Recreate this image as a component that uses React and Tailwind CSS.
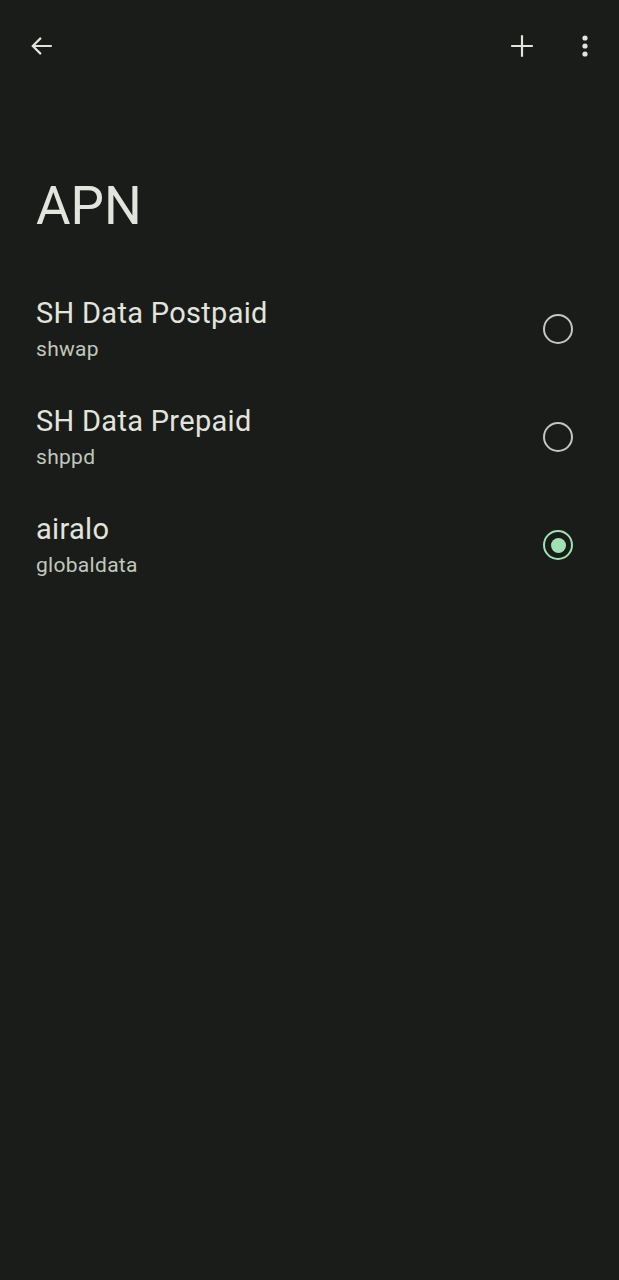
import { useState } from "react";

const apns = [
  { id: "postpaid", name: "SH Data Postpaid", apn: "shwap" },
  { id: "prepaid", name: "SH Data Prepaid", apn: "shppd" },
  { id: "airalo", name: "airalo", apn: "globaldata" },
];

function Radio({ checked }) {
  return (
    <span
      className={
        "flex h-[30px] w-[30px] items-center justify-center rounded-full border-[2.5px] " +
        (checked ? "border-[#9fe3b2]" : "border-[#c2c8bf]")
      }
    >
      {checked && <span className="h-[15px] w-[15px] rounded-full bg-[#9fe3b2]" />}
    </span>
  );
}

export default function App() {
  const [selected, setSelected] = useState("airalo");

  return (
    <div className="min-h-[1280px] bg-[#191c18] font-['Roboto',sans-serif] text-[#e2e4dd]">
      <header className="flex h-[92px] items-center justify-between px-[22px]">
        <button className="flex h-10 w-10 items-center justify-center">
          <svg width="26" height="26" viewBox="0 0 24 24" fill="none" stroke="#e2e4dd" strokeWidth="2">
            <path d="M21 12H4M11 4.5 3.5 12l7.5 7.5" />
          </svg>
        </button>
        <div className="flex items-center gap-[31px]">
          <button className="flex h-10 w-10 items-center justify-center">
            <svg width="26" height="26" viewBox="0 0 24 24" fill="none" stroke="#e2e4dd" strokeWidth="2">
              <path d="M12 2v20M2 12h20" />
            </svg>
          </button>
          <button className="flex h-10 w-6 items-center justify-center">
            <svg width="8" height="22" viewBox="0 0 8 22" fill="#e2e4dd">
              <circle cx="4" cy="3" r="2.6" />
              <circle cx="4" cy="11" r="2.6" />
              <circle cx="4" cy="19" r="2.6" />
            </svg>
          </button>
        </div>
      </header>

      <h1 className="mt-[82px] px-[36px] text-[53px] leading-[64px] font-normal">APN</h1>

      <ul className="mt-[37px]">
        {apns.map((item) => (
          <li
            key={item.id}
            onClick={() => setSelected(item.id)}
            className="flex h-[108px] items-center justify-between pr-[46px] pl-[36px]"
          >
            <div className="flex flex-col">
              <span className="text-[29px] leading-[36px] tracking-[0.3px]">{item.name}</span>
              <span className="mt-[4px] text-[21px] leading-[28px] tracking-[0.3px] text-[#c0c8bd]">
                {item.apn}
              </span>
            </div>
            <Radio checked={selected === item.id} />
          </li>
        ))}
      </ul>
    </div>
  );
}
